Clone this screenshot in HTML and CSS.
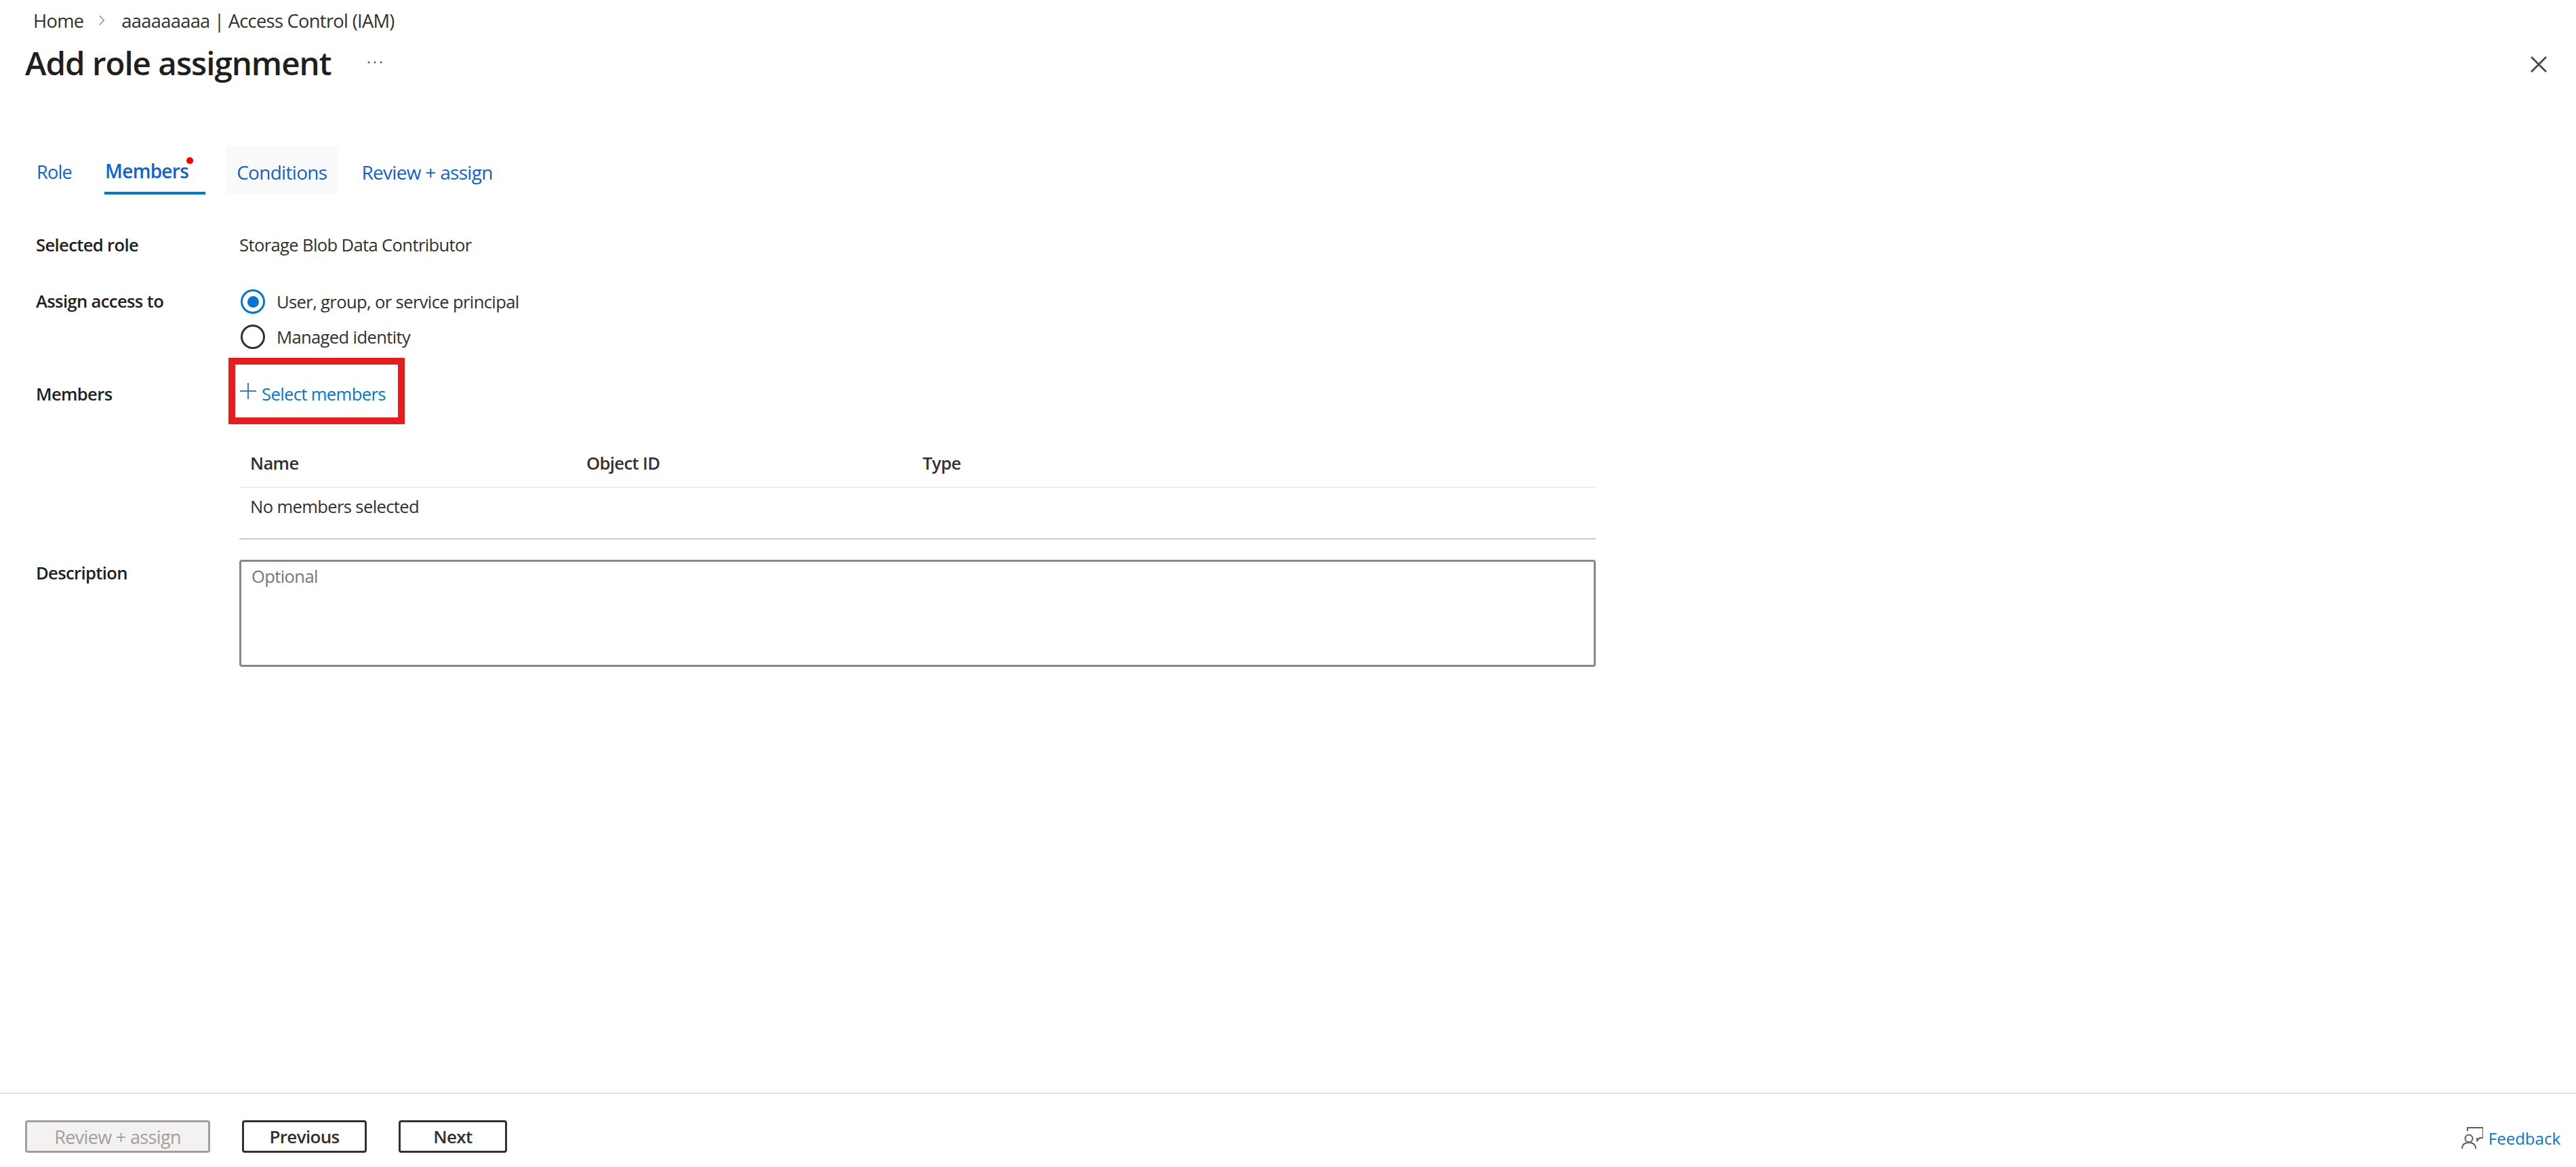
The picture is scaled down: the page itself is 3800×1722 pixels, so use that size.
FILE: index.html
```html
<!DOCTYPE html>
<html lang="en">
<head>
    <meta charset="UTF-8">
    <title>Add role assignment</title>
    <link rel="stylesheet" href="styles.css">
</head>
<body>
    <header class="page-header">
        <nav class="breadcrumb">
            <a class="crumb" href="#">Home</a>
            <svg class="crumb-chevron" viewBox="0 0 12 20" width="10" height="18"><path d="M2 2l8 8-8 8" fill="none" stroke="#8a8886" stroke-width="1.6"/></svg>
            <a class="crumb" href="#">aaaaaaaaa | Access Control (IAM)</a>
        </nav>
        <div class="title-row">
            <h1>Add role assignment</h1>
            <svg class="more-icon" viewBox="0 0 22 4" width="22" height="4"><circle cx="2" cy="2" r="1.5"/><circle cx="11" cy="2" r="1.5"/><circle cx="20" cy="2" r="1.5"/></svg>
            <svg class="close-icon" viewBox="0 0 24 24" width="24" height="24"><path d="M1 1l22 22M23 1L1 23" fill="none" stroke="#444" stroke-width="2.6"/></svg>
        </div>
    </header>

    <div class="tabs">
        <a class="tab tab-first" href="#">Role</a>
        <a class="tab tab-active" href="#">Members<span class="tab-dot"></span></a>
        <a class="tab tab-hover" href="#">Conditions</a>
        <a class="tab" href="#">Review + assign</a>
    </div>

    <main class="form">
        <div class="row row-role">
            <div class="label">Selected role</div>
            <div>Storage Blob Data Contributor</div>
        </div>
        <div class="row row-access">
            <div class="label">Assign access to</div>
            <div class="radio-group">
                <label class="radio-line"><span class="radio radio-on"></span>User, group, or service principal</label>
                <label class="radio-line"><span class="radio"></span>Managed identity</label>
            </div>
        </div>
        <div class="row row-members">
            <div class="label">Members</div>
            <div class="select-box">
                <svg class="plus-icon" viewBox="0 0 24 24" width="24" height="24"><path d="M12 0v24M0 12h24" fill="none" stroke="#3a78dc" stroke-width="2"/></svg>
                <a class="select-link" href="#">Select members</a>
            </div>
        </div>
        <div class="row row-table">
            <div></div>
            <div class="members-table">
                <div class="table-head">
                    <div>Name</div>
                    <div>Object ID</div>
                    <div>Type</div>
                </div>
                <div class="table-empty">No members selected</div>
            </div>
        </div>
        <div class="row row-desc">
            <div class="label">Description</div>
            <textarea class="desc-input" placeholder="Optional"></textarea>
        </div>
    </main>

    <footer class="page-footer">
        <div class="buttons">
            <button class="btn btn-review" disabled>Review + assign</button>
            <button class="btn btn-prev">Previous</button>
            <button class="btn btn-next">Next</button>
        </div>
        <a class="feedback" href="#">
            <svg viewBox="0 0 32 32" width="32" height="32" fill="none" stroke="#605e5c" stroke-width="2"><path d="M9 6V1h23v15h-5l-4 4v-4"/><circle cx="11" cy="17" r="5.5"/><path d="M1 32c0-6 4-9 10-9s10 3 10 9"/></svg>
            Feedback
        </a>
    </footer>
</body>
</html>
```

FILE: styles.css
```css
* {
    box-sizing: border-box;
}

html, body {
    margin: 0;
    padding: 0;
    height: 100%;
}

body {
    font-family: "Open Sans", "Noto Sans", Arial, sans-serif;
    font-size: 25.6px;
    letter-spacing: -0.64px;
    color: #323130;
    background-color: white;
    display: flex;
    flex-direction: column;
    height: 1722px;
    overflow: hidden;
}

a {
    text-decoration: none;
    color: inherit;
}

/* Header */
.page-header {
    padding-left: 37px;
    padding-right: 43px;
}

.breadcrumb {
    display: flex;
    align-items: center;
    height: 30px;
    margin-top: 15px;
    padding-left: 12px;
    font-size: 27.3px;
    letter-spacing: -0.7px;
}

.crumb-chevron {
    margin: 0 24px 0 22px;
}

.title-row {
    display: flex;
    align-items: center;
    height: 66px;
    margin-top: 14px;
}

h1 {
    margin: 0;
    font-size: 47.5px;
    font-weight: 600;
    letter-spacing: -1px;
    color: #201f1e;
}

.more-icon {
    margin-left: 53px;
    fill: #605e5c;
}

.close-icon {
    margin-left: auto;
    margin-top: 6px;
}

/* Tabs */
.tabs {
    display: flex;
    align-items: stretch;
    height: 72px;
    margin-top: 90px;
    padding-left: 38px;
    font-size: 28px;
    letter-spacing: -0.7px;
    color: #0f62cf;
}

.tab {
    display: flex;
    align-items: center;
    padding: 5px 16px 0;
    margin-right: 17px;
    position: relative;
}

.tab-first {
    font-size: 27px;
    margin-right: 32px;
}

.tab-active {
    font-weight: 600;
    padding: 5px 25px 0 1px;
    margin-right: 30px;
    border-bottom: 4px solid #0078d4;
}

.tab-hover {
    background-color: #fafafa;
    padding-right: 18px;
}

.tab-dot {
    position: absolute;
    top: 17px;
    right: 18px;
    width: 10px;
    height: 10px;
    border-radius: 50%;
    background-color: #f00;
}

/* Form */
.form {
    padding-left: 53px;
}

.row {
    display: grid;
    grid-template-columns: 300px 2001px;
}

.label {
    font-weight: 600;
    color: #201f1e;
}

.row-role {
    margin-top: 57px;
}

.row-access {
    margin-top: 48px;
}

.radio-group {
    display: flex;
    flex-direction: column;
    gap: 16px;
}

.radio-line {
    display: flex;
    align-items: center;
    height: 36px;
    padding-left: 2px;
}

.radio {
    width: 36px;
    height: 36px;
    margin-right: 17px;
    border: 3px solid #323130;
    border-radius: 50%;
    background-color: white;
    display: flex;
    align-items: center;
    justify-content: center;
}

.radio-on {
    border-color: #0078d4;
}

.radio-on::after {
    content: "";
    width: 17px;
    height: 17px;
    border-radius: 50%;
    background-color: #0078d4;
}

.row-members {
    margin-top: 13px;
    align-items: center;
}

.row-members .label {
    margin-top: 8px;
}

.select-box {
    display: flex;
    align-items: center;
    width: 260px;
    height: 98px;
    margin-left: -16px;
    padding-left: 7px;
    border: 10px solid #e81c1c;
}

.select-link {
    margin-left: 8px;
    margin-top: 8px;
    color: #0078d4;
}

.row-table {
    margin-top: 40px;
}

.members-table {
    border-bottom: 2px solid #cccccc;
    height: 130px;
}

.table-head {
    display: grid;
    grid-template-columns: repeat(3, 496px);
    height: 54px;
    padding-left: 16px;
    border-bottom: 2px solid #eeeeee;
    font-weight: 600;
}

.table-empty {
    padding: 10px 0 0 16px;
}

.row-desc {
    margin-top: 30px;
}

.row-desc .label {
    margin-top: 2px;
}

.desc-input {
    display: block;
    width: 100%;
    height: 158px;
    padding: 4px 15px;
    border: 3px solid #8a8886;
    border-radius: 4px;
    font: inherit;
    letter-spacing: inherit;
    color: #323130;
    resize: none;
    outline: none;
}

.desc-input::placeholder {
    color: #777;
    opacity: 1;
}

/* Footer */
.page-footer {
    margin-top: auto;
    height: 110px;
    border-top: 2px solid #e1e1e1;
    display: flex;
    justify-content: space-between;
    padding: 39px 23px 0 37px;
}

.buttons {
    display: flex;
    gap: 47px;
}

.btn {
    height: 48px;
    border: 3px solid #323130;
    border-radius: 4px;
    background-color: white;
    color: #323130;
    font-family: inherit;
    font-size: 26px;
    font-weight: 600;
    letter-spacing: -0.65px;
}

.btn-review {
    width: 273px;
    border-color: #a19f9d;
    background-color: #f3f2f1;
    color: #a19f9d;
    font-weight: 400;
    font-size: 27px;
}

.btn-prev {
    width: 184px;
}

.btn-next {
    width: 160px;
}

.feedback {
    display: flex;
    align-items: center;
    gap: 8px;
    height: 32px;
    margin-top: 10px;
    font-size: 24px;
    color: #0078d4;
    letter-spacing: 0;
}
```
